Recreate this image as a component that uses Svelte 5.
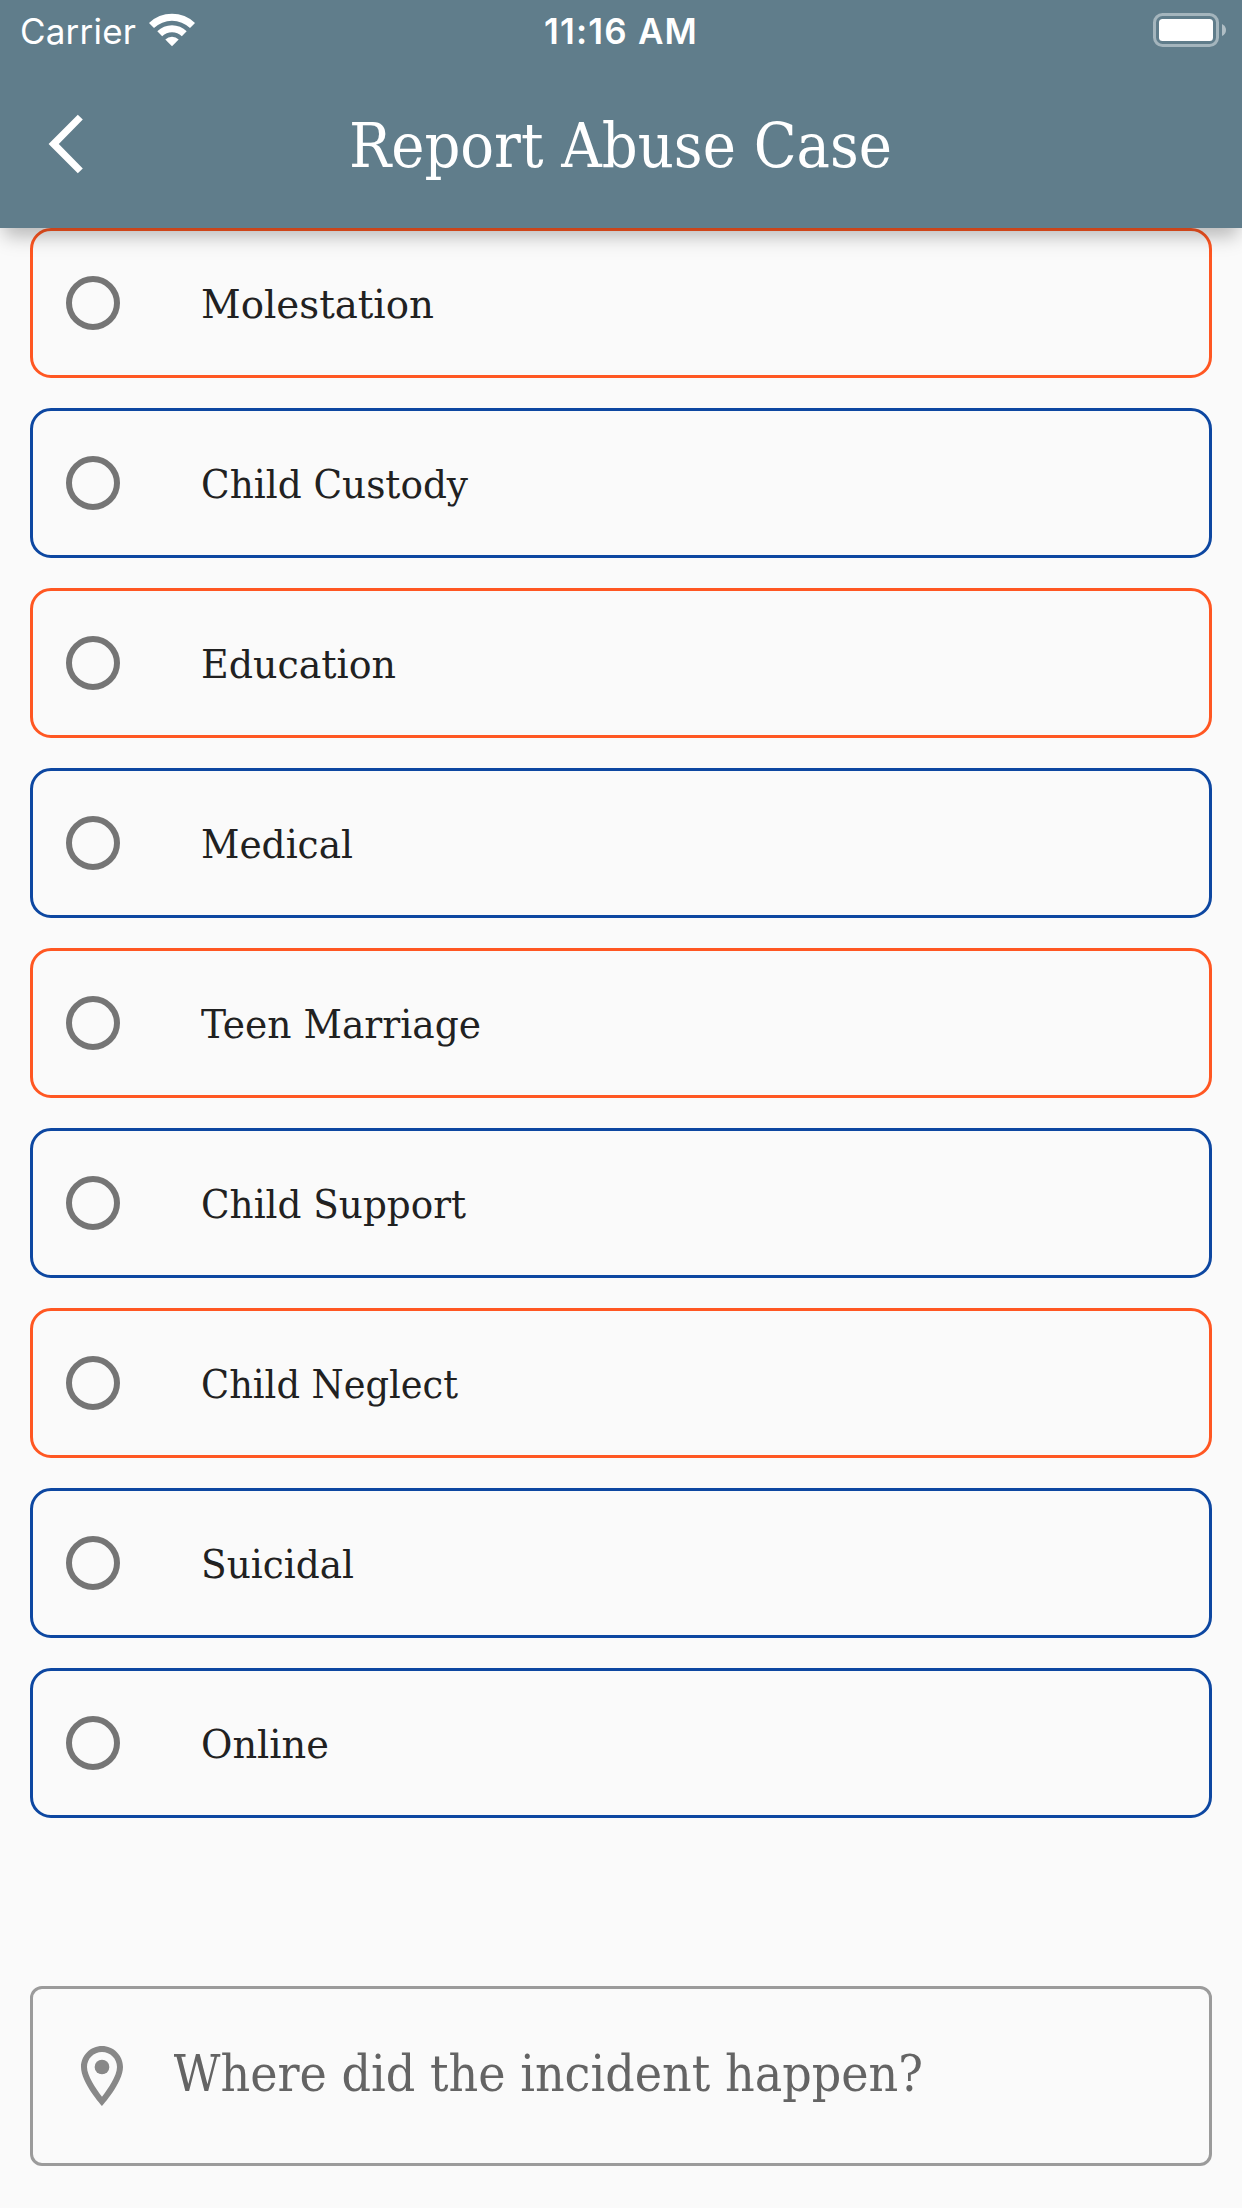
<script>
  const cases = [
    { label: 'Molestation', tone: 'orange', width: 233 },
    { label: 'Child Custody', tone: 'blue', width: 267 },
    { label: 'Education', tone: 'orange', width: 195 },
    { label: 'Medical', tone: 'blue', width: 152 },
    { label: 'Teen Marriage', tone: 'orange', width: 280 },
    { label: 'Child Support', tone: 'blue', width: 265 },
    { label: 'Child Neglect', tone: 'orange', width: 257 },
    { label: 'Suicidal', tone: 'blue', width: 153 },
    { label: 'Online', tone: 'blue', width: 128 }
  ];
</script>

<div class="screen">
  <header>
    <div class="status">
      <div class="network">
        <span class="carrier">Carrier</span>
        <svg width="46" height="34" viewBox="0 0 46 34" fill="#fff">
          <path d="M0 10 A33 33 0 0 1 46 10 L41 15 A26 26 0 0 0 5 15 Z" />
          <path d="M8.3 18.3 A21 21 0 0 1 37.7 18.3 L32.8 23.2 A14 14 0 0 0 13.2 23.2 Z" />
          <path d="M16.3 26.5 A9.5 9.5 0 0 1 29.7 26.5 L23 33.2 Z" />
        </svg>
      </div>
      <span class="time">11:16 AM</span>
      <div class="power">
        <svg width="74" height="34" viewBox="0 0 74 34">
          <rect x="1.5" y="1.5" width="63" height="31" rx="8" fill="none" stroke="#fff" stroke-opacity=".43" stroke-width="3" />
          <rect x="6" y="6" width="54" height="22" rx="3.5" fill="#fff" />
          <path d="M69 11 Q73 13 73 17 Q73 21 69 23 Z" fill="#fff" fill-opacity=".5" />
        </svg>
      </div>
    </div>
    <div class="bar">
      <svg class="back" width="36" height="60" viewBox="0 0 36 60" fill="#fff">
        <path d="M29.8 .7 L34.8 5.6 L10.8 30 L34.8 54.4 L29.8 59.3 L.6 30 Z" />
      </svg>
      <h1>
        <svg width="544" height="84">
          <text x="0" y="65" textLength="543" lengthAdjust="spacingAndGlyphs">Report Abuse Case</text>
        </svg>
      </h1>
    </div>
  </header>

  <main>
    <div class="cases" role="radiogroup">
      {#each cases as item}
        <div class="case {item.tone}" role="radio" aria-checked="false" tabindex="0">
          <span class="ring"></span>
          <svg class="label" width="300" height="60">
            <text x="0" y="43.5" textLength={item.width} lengthAdjust="spacingAndGlyphs">{item.label}</text>
          </svg>
        </div>
      {/each}
    </div>

    <div class="field">
      <svg class="pin" width="72" height="72" viewBox="0 0 24 24" fill="#888">
        <path d="M12 2C8.13 2 5 5.13 5 9c0 5.25 7 13 7 13s7-7.75 7-13c0-3.87-3.13-7-7-7zM7 9c0-2.76 2.24-5 5-5s5 2.24 5 5c0 2.88-2.88 7.19-5 9.88C9.92 16.21 7 11.85 7 9z" />
        <circle cx="12" cy="9" r="2.45" />
      </svg>
      <svg class="hint" width="760" height="72">
        <text x="-1" y="54" textLength="750" lengthAdjust="spacingAndGlyphs">Where did the incident happen?</text>
      </svg>
    </div>
  </main>
</div>

<style>
  :global(body) {
    background: #fafafa;
  }
  .screen {
    width: 1242px;
    height: 2208px;
    overflow: hidden;
    background: #fafafa;
    font-family: 'DejaVu Serif Condensed', 'DejaVu Serif', serif;
    font-stretch: condensed;
  }
  svg {
    display: block;
    flex: none;
  }
  header {
    position: relative;
    z-index: 1;
    height: 228px;
    background: #607d8b;
    color: #fff;
    box-shadow: 0 12px 18px -4px rgba(0, 0, 0, 0.27);
  }
  .status {
    display: grid;
    grid-template-columns: 1fr auto 1fr;
    align-items: center;
    height: 60px;
    padding: 0 20px;
    font-family: Inter, sans-serif;
    font-stretch: normal;
    font-size: 35px;
    line-height: 60px;
  }
  .network {
    display: flex;
    align-items: center;
    gap: 13px;
  }
  .carrier {
    width: 116px;
    white-space: nowrap;
    padding-top: 3px;
    line-height: 57px;
    letter-spacing: 0.2px;
  }
  .time {
    font-weight: 600;
    padding-top: 3px;
    line-height: 57px;
    letter-spacing: 1.2px;
  }
  .power {
    justify-self: end;
    margin-right: -5px;
  }
  .bar {
    display: grid;
    grid-template-columns: 1fr auto 1fr;
    align-items: center;
    height: 168px;
    padding: 0 48px;
  }
  h1 {
    margin: 0;
    font-size: 61px;
    font-weight: 400;
  }
  h1 text {
    fill: #fff;
  }
  main {
    display: flex;
    flex-direction: column;
    gap: 168px;
    padding: 0 30px;
  }
  .cases {
    display: flex;
    flex-direction: column;
    gap: 30px;
  }
  .case {
    box-sizing: border-box;
    display: flex;
    align-items: center;
    gap: 81px;
    height: 150px;
    padding-left: 33px;
    border: 3px solid;
    border-radius: 21px;
  }
  .orange {
    border-color: #ff5722;
  }
  .blue {
    border-color: #0d47a1;
  }
  .ring {
    box-sizing: border-box;
    width: 54px;
    height: 54px;
    border: 6px solid #757575;
    border-radius: 50%;
  }
  .label {
    font-size: 39.5px;
    fill: #212121;
    margin-top: 2px;
  }
  .field {
    box-sizing: border-box;
    display: flex;
    align-items: center;
    gap: 36px;
    height: 180px;
    padding-left: 33px;
    border: 3px solid #9b9b9b;
    border-radius: 12px;
  }
  .hint {
    font-size: 49.5px;
    fill: #646464;
    margin-top: -6px;
  }
</style>
